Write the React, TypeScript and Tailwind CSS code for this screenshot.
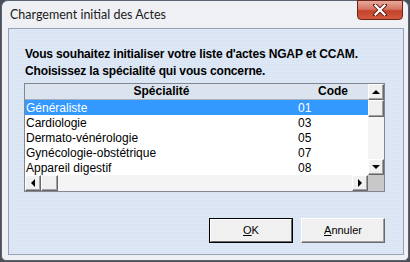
import React from 'react';

const rows = [
  { name: 'Généraliste', code: '01' },
  { name: 'Cardiologie', code: '03' },
  { name: 'Dermato-vénérologie', code: '05' },
  { name: 'Gynécologie-obstétrique', code: '07' },
  { name: 'Appareil digestif', code: '08' },
];

// classic 3D scroll button
const ScrollBtn: React.FC<{ dir?: 'up' | 'down' | 'left' | 'right'; className?: string }> = ({ dir, className = '' }) => (
  <div
    className={`flex items-center justify-center bg-[#f0f0f0] border border-t-white border-l-white border-r-[#696969] border-b-[#696969] shadow-[inset_-1px_-1px_0_#a0a0a0] ${className}`}
  >
    {dir === 'up' && <div className="w-0 h-0 border-l-[4px] border-r-[4px] border-b-[4px] border-l-transparent border-r-transparent border-b-black" />}
    {dir === 'down' && <div className="w-0 h-0 border-l-[4px] border-r-[4px] border-t-[4px] border-l-transparent border-r-transparent border-t-black" />}
    {dir === 'left' && <div className="w-0 h-0 border-t-[4px] border-b-[4px] border-r-[4px] border-t-transparent border-b-transparent border-r-black" />}
    {dir === 'right' && <div className="w-0 h-0 border-t-[4px] border-b-[4px] border-l-[4px] border-t-transparent border-b-transparent border-l-black" />}
  </div>
);

const App: React.FC = () => {
  return (
    <div className="w-[410px] h-[262px] bg-[#4a4f57] overflow-hidden">
      <div className="ml-[1px] w-[408px] h-[261px] flex flex-col rounded-t-[7px] rounded-b-[5px] border border-[#5b6270] bg-[#eef0f4] pl-[6px] pr-[4px] pb-[5px]">
        {/* title bar */}
        <div className="h-[27px] flex justify-between">
          <div className="pt-[6px] pl-[2px] text-[12.5px] text-[#1b1b1b] font-['Lato',sans-serif] leading-[16px]">
            Chargement initial des Actes
          </div>
          <div className="mt-[-1px] mr-[1px] w-[46px] h-[20px] rounded-b-[4px] border border-[#6b2418] bg-[linear-gradient(180deg,#e8a99c_0%,#d67563_45%,#c4422b_55%,#d2593e_100%)] flex items-center justify-center">
            <svg width="14" height="12" viewBox="0 0 14 12">
              <path d="M2 1 L12 11 M12 1 L2 11" stroke="#5a1e14" strokeWidth="4" strokeLinecap="square" />
              <path d="M2.5 1.5 L11.5 10.5 M11.5 1.5 L2.5 10.5" stroke="#ffffff" strokeWidth="2.2" strokeLinecap="square" />
            </svg>
          </div>
        </div>

        {/* client area */}
        <div className="flex-1 flex flex-col border border-[#97a3b4] bg-[repeating-linear-gradient(180deg,#dfe8f6_0px,#dfe8f6_1px,#d9e4f3_1px,#d9e4f3_2px)] pl-[15px] pt-[17px] font-['Liberation_Sans',Arial,sans-serif]">
          <div className="ml-[1px] text-[12px] font-bold leading-[17px] text-black tracking-[-0.15px]">
            <div>Vous souhaitez initialiser votre liste d'actes NGAP et CCAM.</div>
            <div>Choisissez la spécialité qui vous concerne.</div>
          </div>

          {/* grid */}
          <div className="mt-[3px] w-[361px] flex flex-col border border-[#828790] bg-white">
            <div className="flex">
              <div className="w-[343px] flex flex-col">
                <div className="h-[16px] flex bg-[#dbe3ee] border-b border-[#a7b0bd] text-[12px] font-bold leading-[15px] text-black">
                  <div className="w-[273px] text-center">Spécialité</div>
                  <div className="w-[70px] text-center">Code</div>
                </div>
                {rows.map((r, i) => (
                  <div
                    key={r.code}
                    className={`h-[15px] flex text-[12px] leading-[16px] ${i === 0 ? 'bg-[#3399ff] text-white' : 'text-black'}`}
                  >
                    <div className="w-[273px] pl-[1px]">{r.name}</div>
                    <div className="w-[70px]">{r.code}</div>
                  </div>
                ))}
              </div>
              <div className="w-[16px] flex flex-col bg-[#f4f4f4]">
                <ScrollBtn dir="up" className="h-[16px]" />
                <ScrollBtn className="h-[17px]" />
                <div className="flex-1" />
                <ScrollBtn dir="down" className="h-[16px]" />
              </div>
            </div>
            <div className="h-[16px] flex bg-[#f4f4f4]">
              <ScrollBtn dir="left" className="w-[16px]" />
              <ScrollBtn className="w-[17px]" />
              <div className="flex-1" />
              <ScrollBtn dir="right" className="w-[16px]" />
              <div className="w-[16px] bg-[#c8c8c8]" />
            </div>
          </div>

          {/* buttons */}
          <div className="mt-[26px] w-[361px] flex justify-end gap-[8px] text-[11px] text-black">
            <div className="w-[84px] h-[25px] border border-black">
              <div className="w-full h-full flex items-center justify-center bg-[#f0f0f0] border border-t-white border-l-white border-r-[#696969] border-b-[#696969]">
                <span><span className="underline">O</span>K</span>
              </div>
            </div>
            <div className="w-[84px] h-[25px] flex items-center justify-center bg-[#f0f0f0] border border-t-white border-l-white border-r-[#696969] border-b-[#696969] shadow-[inset_-1px_-1px_0_#a0a0a0]">
              <span><span className="underline">A</span>nnuler</span>
            </div>
          </div>
        </div>
      </div>
    </div>
  );
};

export default App;
